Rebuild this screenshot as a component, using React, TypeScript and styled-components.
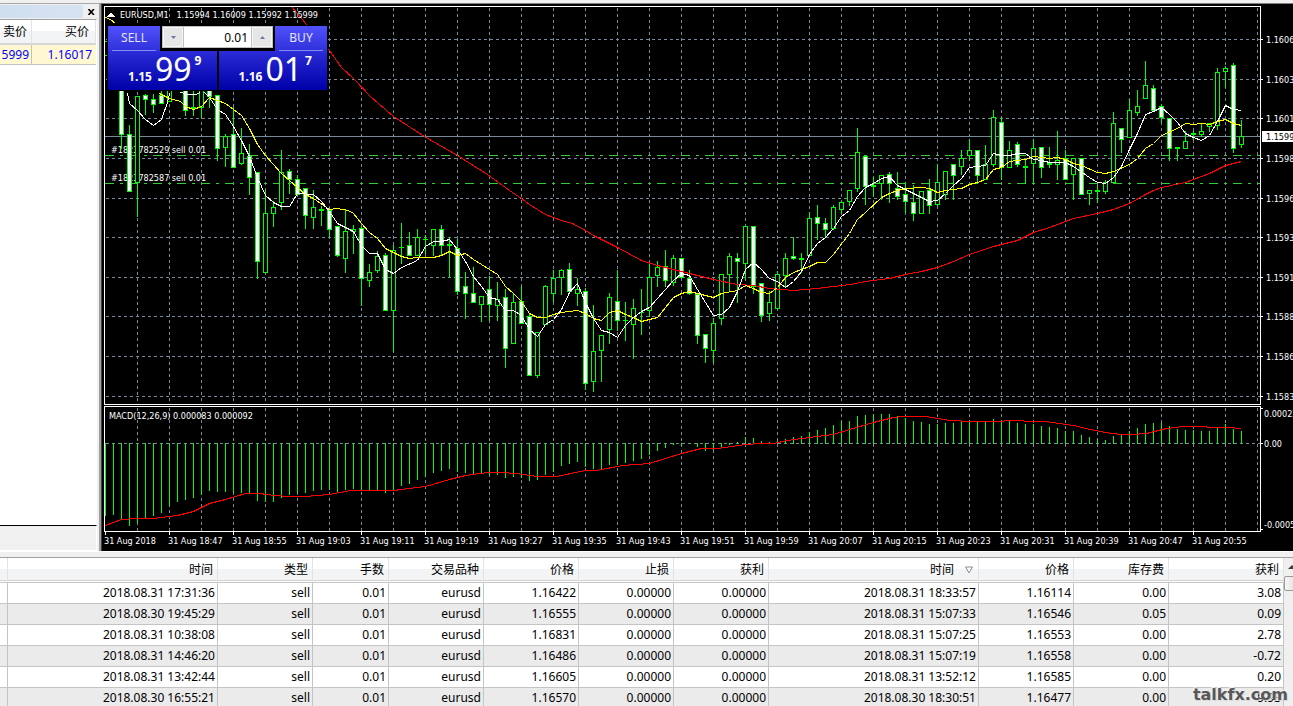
import React from "react";
import styled, { createGlobalStyle } from "styled-components";

/* ---------- theme values ---------- */

const UI_FONT = '"Noto Sans", "Noto Sans CJK SC", sans-serif';
const CHART_FONT = '"DejaVu Sans Condensed", "DejaVu Sans", sans-serif';
const GRID = "#778899";
const LIME = "#00ff00";
const FACE = "#f0f0f0";
const RULE = "#c4c4c4";

const GlobalStyle = createGlobalStyle`
  *, *::before, *::after { box-sizing: border-box; }
  body { margin: 0; background: ${FACE}; font-family: ${UI_FONT}; font-size: 12px; color: #000; }
  button, input { font: inherit; border: 0; padding: 0; margin: 0; border-radius: 0; }
`;

/* ---------- chart data ---------- */

type Candle = [high: number, top: number, bottom: number, low: number, kind: "f" | "h"];

const f = "f" as const;
const h = "h" as const;

// One candle every 8px, the first one at x = 105.
const CANDLES: (Candle | null)[] = [
  [41, 41, 56, 56, h], [68, 68, 83, 83, h],
  [60, 70, 135, 149, f], [125, 134, 192, 192, f], [96, 96, 183, 217, h], [94, 95, 100, 115, f],
  [94, 99, 105, 113, f], [85, 95, 104, 104, f], [60, 70, 102, 102, h], null,
  [60, 70, 111, 116, f], [80, 107, 109, 116, h], [60, 70, 108, 118, h], [60, 80, 97, 108, f],
  [95, 95, 149, 161, f], [134, 136, 148, 167, h], [107, 134, 168, 168, f], [128, 153, 164, 165, h],
  [144, 156, 178, 195, f], [172, 172, 262, 279, f], [190, 213, 273, 273, h], [201, 207, 214, 227, h],
  [150, 172, 203, 210, h], [169, 171, 180, 194, f], [175, 179, 195, 195, f], [188, 188, 216, 229, f],
  [190, 207, 218, 229, h], [206, 209, 211, 226, h], [210, 210, 230, 237, f], [226, 226, 256, 257, f],
  [209, 231, 259, 273, h], [225, 229, 232, 254, h], [226, 228, 279, 306, f], [264, 272, 281, 287, h],
  [251, 256, 271, 273, h], [253, 255, 311, 311, f], [245, 250, 311, 352, h], [223, 247, 248, 264, h],
  [232, 245, 256, 256, f], [229, 237, 256, 256, h], [235, 239, 240, 254, h], [229, 229, 246, 256, h],
  [225, 229, 246, 256, f], [237, 244, 246, 278, h], [239, 248, 292, 295, f], [272, 286, 294, 319, f],
  [267, 293, 303, 303, f], [296, 296, 305, 322, h], [276, 289, 305, 321, f], [282, 299, 306, 321, h],
  [289, 297, 349, 368, f], [294, 302, 344, 344, h], [286, 301, 324, 324, f], [313, 316, 376, 376, f],
  [332, 332, 376, 378, h], [285, 286, 325, 325, h], [270, 278, 294, 302, h], [269, 270, 278, 295, h],
  [263, 269, 292, 294, f], [278, 289, 294, 306, h], [288, 291, 384, 390, f], [305, 351, 382, 392, h],
  [335, 335, 351, 382, h], [293, 297, 330, 344, h], [270, 301, 321, 331, f], [302, 320, 321, 341, h],
  [299, 308, 325, 359, h], [289, 312, 313, 335, h], [263, 277, 311, 317, h], [261, 267, 276, 287, h],
  [250, 266, 281, 287, f], [255, 258, 283, 286, h], [258, 258, 278, 279, f], [270, 278, 294, 295, f],
  [294, 294, 336, 344, f], [334, 334, 349, 363, f], [318, 323, 351, 363, h], [274, 274, 319, 325, h],
  [253, 256, 275, 292, h], [253, 258, 262, 303, f], [226, 226, 264, 280, h], [226, 226, 287, 294, f],
  [283, 283, 316, 322, f], [291, 302, 314, 321, h], [271, 274, 309, 309, h], [253, 258, 276, 287, h],
  [237, 256, 259, 260, f], [253, 258, 260, 273, h], [212, 218, 256, 256, h], [205, 217, 224, 240, f],
  [218, 223, 230, 237, f], [205, 207, 229, 230, h], [201, 202, 210, 214, h], [190, 190, 202, 206, h],
  [128, 152, 189, 192, h], [155, 156, 187, 205, f], [177, 185, 187, 197, h], [175, 175, 184, 200, h],
  [172, 174, 184, 203, f], [172, 188, 197, 200, f], [182, 194, 202, 213, f], [185, 202, 214, 221, f],
  [191, 191, 214, 214, h], [179, 190, 206, 214, f], [164, 182, 205, 206, h], [171, 171, 195, 200, h],
  [164, 164, 176, 200, f], [150, 158, 167, 175, h], [139, 150, 156, 161, h], [150, 150, 176, 184, f],
  [145, 164, 180, 180, h], [110, 117, 165, 167, h], [117, 122, 168, 180, f], [141, 150, 168, 168, h],
  [142, 144, 165, 167, f], [159, 166, 168, 184, h], [139, 148, 164, 184, h], [147, 147, 168, 178, f],
  [147, 163, 165, 168, h], [131, 160, 165, 180, h], [150, 158, 180, 180, f], [158, 158, 175, 200, h],
  [158, 158, 195, 195, f], [190, 190, 194, 205, h], [185, 190, 192, 203, h], [180, 182, 192, 194, h],
  [112, 123, 183, 183, h], [128, 128, 140, 153, f], [99, 110, 138, 138, h], [90, 106, 113, 116, h],
  [61, 85, 99, 99, h], [85, 88, 111, 111, f], [104, 106, 118, 123, f], [118, 118, 149, 161, f],
  [147, 147, 149, 161, h], [131, 141, 149, 149, h], [131, 133, 135, 140, h], [124, 131, 135, 137, h],
  [123, 123, 127, 132, h], [68, 72, 126, 130, h], [66, 68, 72, 88, h], [63, 65, 149, 153, f],
  [120, 136, 145, 148, h],
];

// Far end of each MACD histogram bar, measured from the zero line at y = 443.
const MACD_BARS = [
  515, 514, 518, 525, 522, 518, 515, 512, 505, 501, 499, 497, 494, 490, 491, 491, 492, 492, 493, 500,
  501, 501, 497, 494, 492, 492, 490, 489, 489, 491, 489, 488, 490, 490, 489, 492, 489, 485, 483, 479,
  476, 472, 470, 468, 471, 472, 473, 473, 474, 474, 477, 476, 477, 480, 479, 474, 471, 465, 463, 461,
  466, 468, 468, 464, 464, 462, 460, 458, 454, 450, 447, 444, 445, 443, 446, 450, 449, 447, 444, 442,
  437, 438, 441, 442, 441, 439, 437, 436, 432, 430, 428, 425, 421, 421, 416, 415, 414, 414, 414, 416,
  418, 421, 422, 424, 424, 423, 423, 422, 422, 422, 422, 419, 420, 421, 423, 424, 424, 426, 427, 428,
  431, 431, 435, 437, 439, 440, 436, 435, 431, 428, 424, 423, 423, 426, 429, 430, 430, 431, 431, 428,
  424, 429, 431,
];

const YELLOW_MA = [
  "105,17 110,19 115,23",
  "159,93 169,98 180,101 185,106 193,109 201,106 209,97 225,103 241,115 249,128 257,144 265,155 281,173 297,187 305,194 313,198 329,209 337,208 348,210 353,213 361,223 369,232 377,238 385,248 393,252 401,256 409,258 417,257 433,257 441,255 449,251 457,255 465,253 473,259 481,264 489,269 497,274 505,286 513,293 521,301 529,313 537,317 545,317 553,314 561,312 577,310 585,313 593,318 601,320 609,312 617,310 625,314 633,317 641,321 649,319 657,317 665,307 673,297 681,293 689,291 713,297 721,293 737,290 745,285 753,288 761,292 769,293 777,287 785,277 793,272 801,269 809,266 817,262 825,262 833,254 849,233 857,219 865,212 881,197 889,193 897,190 905,188 922,187 929,188 937,192 945,190 961,188 969,184 977,182 985,179 993,169 1001,167 1009,161 1025,159 1033,156 1049,158 1057,157 1065,159 1073,163 1081,165 1097,172 1105,173 1113,171 1129,164 1137,158 1145,148 1153,143 1161,135 1177,128 1185,123 1193,124 1201,123 1209,124 1217,121 1225,119 1233,123 1241,125",
];

const WHITE_MA = [
  "127,93 129,103 137,110 145,119 153,125 161,119 167,102 169,93",
  "180,92 189,94 195,94 200,92",
  "204,92 209,97 217,109 225,114 233,126 241,140 249,156 257,177 265,195 273,202 281,206 289,206 297,193 313,194 321,201 329,211 337,223 345,227 353,231 361,245 369,253 377,253 385,269 393,273 401,267 417,260 425,246 433,241 441,241 449,239 457,249 465,261 473,276 481,286 489,297 497,299 505,310 513,310 521,315 529,329 537,336 545,324 553,319 561,309 569,292 577,283 585,302 593,318 601,330 609,332 617,337 625,325 633,317 641,311 649,307 657,298 665,289 673,280 681,273 689,275 697,289 705,302 713,315 721,314 729,307 737,291 745,269 753,262 761,269 769,278 777,281 785,287 793,281 801,271 809,254 817,243 825,237 833,228 841,216 849,210 857,196 865,187 873,183 881,178 889,176 897,185 913,193 929,201 937,200 945,193 953,185 961,178 969,167 977,166 985,165 993,153 1001,155 1009,155 1017,153 1025,153 1033,159 1041,160 1049,162 1065,162 1073,166 1089,177 1097,182 1105,183 1113,177 1121,166 1129,149 1137,133 1145,114 1153,111 1161,107 1169,114 1177,122 1185,133 1193,137 1201,140 1209,135 1217,121 1225,105 1233,109 1241,110",
];

const RED_MA = [
  "292,7 306,24 329,50 341,67 354,79 370,96 393,116 424,136 457,155 487,174 509,190 521,198 529,204 545,214 561,220 572,223 585,230 593,235 617,247 641,260 657,265 689,273 713,279 737,284 753,285 769,288 793,290 817,288 833,286 850,284 865,281 889,278 905,274 921,271 937,267 953,261 969,254 993,246 1017,240 1033,232 1049,227 1073,218 1097,213 1113,209 1129,203 1145,194 1153,190 1161,187 1185,182 1209,173 1225,165 1241,161",
];

const MACD_SIGNAL =
  "105,525 121,519 137,518 153,518 169,516 177,515 193,511 209,503 225,499 245,493 261,493 265,494 287,496 305,496 329,494 350,490 393,490 425,486 449,479 465,475 487,472 500,472 516,473 537,476 556,476 585,470 596,470 622,465 649,463 665,458 681,453 701,448 717,448 745,444 760,443 773,443 787,440 809,437 833,434 849,429 873,422 893,417 903,416 925,416 950,420 970,421 1001,421 1006,420 1021,420 1026,421 1045,421 1073,425 1090,429 1105,432 1120,434 1132,434 1146,433 1166,428 1183,426 1205,426 1208,427 1228,427 1241,428";

const PRICE_LEVELS: [string, number][] = [
  ["1.16060", 39], ["1.16035", 79], ["1.16010", 118], ["1.15985", 158], ["1.15960", 198],
  ["1.15935", 237], ["1.15910", 277], ["1.15885", 316], ["1.15860", 356], ["1.15835", 396],
];

const TIME_LABELS = [
  "31 Aug 2018", "31 Aug 18:47", "31 Aug 18:55", "31 Aug 19:03", "31 Aug 19:11", "31 Aug 19:19",
  "31 Aug 19:27", "31 Aug 19:35", "31 Aug 19:43", "31 Aug 19:51", "31 Aug 19:59", "31 Aug 20:07",
  "31 Aug 20:15", "31 Aug 20:23", "31 Aug 20:31", "31 Aug 20:39", "31 Aug 20:47", "31 Aug 20:55",
];

const ORDER_LINES: [string, number][] = [
  ["#1823782529 sell 0.01", 155],
  ["#1823782587 sell 0.01", 183],
];

const GRID_COLUMNS = Array.from({ length: 36 }, (_, i) => 137 + i * 32);

/* ---------- page frame ---------- */

const Page = styled.div`
  height: 100vh;
  display: flex;
  flex-direction: column;
  overflow: hidden;
  position: relative;
`;

const Workspace = styled.main`
  flex: none;
  display: flex;
  height: 552px;
  border-top: 3px solid ${FACE};
  border-bottom: 1px solid #fff;
`;

/* ---------- market watch ---------- */

const Watch = styled.aside`
  flex: none;
  width: 101px;
  display: flex;
  flex-direction: column;
  border-top: 1px solid #a8a8a8;
  border-right: 2px solid #a0a0a0;
  padding-right: 2px;
`;

const WatchTitle = styled.div`
  display: flex;
  align-items: center;
  justify-content: space-between;
  height: 15px;
`;

const TitleGrip = styled.div`
  width: 83px;
  height: 13px;
  background: linear-gradient(90deg, #d0dff0, #d5e2f2);
`;

const CloseButton = styled.button`
  display: flex;
  background: none;
  width: 9px;
`;

const WatchBody = styled.div`
  flex: 1;
  background: #fff;
  border-top: 1px solid #a0a0a0;
  border-bottom: 1px solid #000;
  border-right: 1px solid #fff;
`;

const WatchFooter = styled.div`
  height: 25px;
  border-right: 1px solid #fff;
  border-bottom: 1px solid #fff;
`;

const WatchTable = styled.table`
  width: 100%;
  border-collapse: separate;
  border-spacing: 0;
  table-layout: fixed;
  text-align: right;

  th {
    height: 25px;
    padding: 0 6px 0 0;
    font-weight: 400;
    line-height: 16px;
    background: linear-gradient(#fff 50%, #f3f4f6 50%);
    border-right: 1px solid #e2e3e5;
    border-bottom: 2px solid #d5d5d5;
  }
  th:first-child { width: 32px; padding-right: 4px; }
  td {
    height: 20px;
    padding: 0 4px 0 0;
    color: #0000ff;
    background: #fff8d2;
    border-bottom: 1px solid ${RULE};
  }
  td:first-child {
    padding-right: 2px;
    border-right: 1px solid ${RULE};
  }
`;

const ClippedPrice = styled.span`
  display: flex;
  justify-content: flex-end;
  overflow: hidden;
`;

/* ---------- chart window ---------- */

const ChartWindow = styled.section`
  flex: 1;
  min-width: 0;
  position: relative;
  overflow: hidden;
  background: #000;
  border-top: 1px solid #808080;
  border-left: 1px solid #404040;
`;

const ChartSvg = styled.svg`
  display: block;
  width: 100%;
  height: 547px;
  shape-rendering: crispEdges;
`;

const ChartText = styled.text<{ $ink?: string }>`
  font-family: ${CHART_FONT};
  font-size: 9px;
  fill: ${(p) => p.$ink ?? "#fff"};
  white-space: pre;
`;

/* ---------- one-click trading panel ---------- */

const TradePanel = styled.form`
  position: absolute;
  left: 5px;
  top: 21px;
  width: 221px;
  padding: 1px;
  background: #000;
`;

const TradeTop = styled.div`
  display: flex;
  justify-content: space-between;
`;

const SideButton = styled.button`
  width: 52px;
  height: 25px;
  padding: 0 4px;
  background: linear-gradient(#5252fb, #3030dc);
  color: #e4e4ff;
  cursor: pointer;

  span {
    display: block;
    height: 24px;
    line-height: 22px;
    border-bottom: 1px solid #8a8af4;
  }
`;

const VolumeBox = styled.div`
  display: flex;
  width: 111px;
  height: 22px;
  padding: 1px;
  gap: 1px;
  background: #c0c0c0;
`;

const VolumeInput = styled.input`
  flex: 1;
  min-width: 0;
  background: #fff;
  text-align: right;
  padding-right: 3px;
  outline: 0;
`;

const StepButton = styled.button`
  display: flex;
  align-items: center;
  justify-content: center;
  width: 20px;
  background: #e6e6e6;
  border: 1px solid #f6f6f6;
`;

const QuoteRow = styled.div`
  display: flex;
  gap: 2px;
`;

const Quote = styled.button`
  flex: 1;
  display: flex;
  justify-content: center;
  height: 39px;
  padding: 0 0 0 5px;
  gap: 3px;
  color: #fff;
  background: linear-gradient(#2c2cd8, #0000a8);
  cursor: pointer;
`;

const QuoteBase = styled.span`
  font-size: 12px;
  font-weight: 700;
  line-height: 16px;
  padding-top: 18px;
`;

const QuoteBig = styled.span`
  font-size: 32px;
  line-height: 35px;
`;

const QuotePip = styled.span`
  font-size: 12px;
  font-weight: 700;
  line-height: 16px;
  padding-top: 2px;
`;

/* ---------- account history ---------- */

const Terminal = styled.section`
  flex: 1;
  display: flex;
  min-height: 0;
  margin-top: 5px;
  border-top: 1px solid #a0a0a0;
  background: #fff;
`;

const TableArea = styled.div`
  flex: 1;
  min-width: 0;
  overflow: hidden;
`;

const HistoryTable = styled.table`
  width: 100%;
  table-layout: fixed;
  border-collapse: separate;
  border-spacing: 0;
  text-align: right;
`;

const HeadCell = styled.th`
  height: 25px;
  padding: 0 4px 0 0;
  font-weight: 400;
  line-height: 16px;
  background: linear-gradient(#fff 11px, #f3f4f6 11px, #f3f4f6 22px, #d0d0d0 22px, #d0d0d0 23px, #fff 23px);
  border-right: 1px solid #e2e3e5;
  border-bottom: 1px solid ${RULE};
`;

const SortLabel = styled.span`
  display: inline-flex;
  align-items: center;
  gap: 11px;
`;

const BodyRow = styled.tr`
  background: #fff;
  &:nth-child(even) { background: #ebebeb; }
`;

const Cell = styled.td`
  height: 21px;
  padding: 0 2px 0 0;
  line-height: 18px;
  white-space: nowrap;
  border-right: 1px solid ${RULE};
  border-bottom: 1px solid ${RULE};
`;

const ScrollTrack = styled.div`
  flex: none;
  width: 9px;
  overflow: hidden;
  background: #f0f0f0;
`;

const ScrollArrow = styled.div`
  height: 18px;
  padding: 7px 0 0 4px;

  svg { display: block; }
`;

const ScrollThumb = styled.div`
  width: 16px;
  height: 15px;
  border: 1px solid #989898;
  border-radius: 2px;
  background: linear-gradient(90deg, #f6f6f6, #dcdcdc);
`;

const Watermark = styled.div`
  position: absolute;
  right: 5px;
  bottom: 2px;
  font-family: "DejaVu Sans", sans-serif;
  font-size: 16px;
  line-height: 18px;
  font-weight: 700;
  color: #585858;
  text-shadow: 1px 1px 0 #d8d8d8, -1px -1px 0 #f4f4f4;
`;

/* ---------- history data ---------- */

const COLUMNS: { label: string; width?: number; sorted?: boolean }[] = [
  { label: "", width: 8 },
  { label: "时间", width: 210 },
  { label: "类型", width: 95 },
  { label: "手数", width: 76 },
  { label: "交易品种", width: 95 },
  { label: "价格", width: 95 },
  { label: "止损", width: 95 },
  { label: "获利", width: 95 },
  { label: "时间", width: 210, sorted: true },
  { label: "价格", width: 95 },
  { label: "库存费", width: 95 },
  { label: "获利" },
];

const ROWS = [
  ["2018.08.31 17:31:36", "1.16422", "2018.08.31 18:33:57", "1.16114", "0.00", "3.08"],
  ["2018.08.30 19:45:29", "1.16555", "2018.08.31 15:07:33", "1.16546", "0.05", "0.09"],
  ["2018.08.31 10:38:08", "1.16831", "2018.08.31 15:07:25", "1.16553", "0.00", "2.78"],
  ["2018.08.31 14:46:20", "1.16486", "2018.08.31 15:07:19", "1.16558", "0.00", "-0.72"],
  ["2018.08.31 13:42:44", "1.16605", "2018.08.31 13:52:12", "1.16585", "0.00", "0.20"],
  ["2018.08.30 16:55:21", "1.16570", "2018.08.30 18:30:51", "1.16477", "0.00", "9.93"],
].map(([opened, openPrice, closed, closePrice, swap, profit]) => [
  "", opened, "sell", "0.01", "eurusd", openPrice, "0.00000", "0.00000", closed, closePrice, swap, profit,
]);

/* ---------- chart drawing ---------- */

function CandleMark({ index, candle }: { index: number; candle: Candle }) {
  const [high, top, bottom, low, kind] = candle;
  const x = 105 + index * 8;
  return (
    <g>
      <rect x={x} y={high} width={1} height={low - high} fill={LIME} />
      <rect x={x - 2} y={top} width={5} height={bottom - top} fill={LIME} />
      {bottom - top > 2 && (
        <rect x={x - 1} y={top + 1} width={3} height={bottom - top - 2} fill={kind === "f" ? "#fff" : "#000"} />
      )}
    </g>
  );
}

function Lines({ sets, color }: { sets: string[]; color: string }) {
  return (
    <g transform="translate(0.5 0.5)">
      {sets.map((points) => (
        <polyline key={points} points={points} fill="none" stroke={color} strokeWidth={1} />
      ))}
    </g>
  );
}

function PriceChart() {
  return (
    <ChartSvg role="img" aria-label="EURUSD,M1">
      <defs>
        <clipPath id="plot">
          <rect x={105} y={7} width={1155} height={397} />
        </clipPath>
      </defs>
      <g transform="translate(-102 -4)">
        <g stroke={GRID} strokeDasharray="3 3">
          {PRICE_LEVELS.map(([, y]) => (
            <line key={y} x1={106} x2={1260} y1={y + 0.5} y2={y + 0.5} />
          ))}
          <line x1={106} x2={1260} y1={443.5} y2={443.5} />
          {GRID_COLUMNS.map((x) => (
            <path key={x} d={`M${x + 0.5} 8V404M${x + 0.5} 408V531`} />
          ))}
        </g>
        <line x1={105} x2={1260} y1={136.5} y2={136.5} stroke={GRID} />

        {ORDER_LINES.map(([label, y]) => (
          <g key={label}>
            <line x1={105} x2={1260} y1={y + 0.5} y2={y + 0.5} stroke="#32cd32" strokeDasharray="9 6 3 6" />
            <ChartText x={111} y={y - 2}>{label}</ChartText>
          </g>
        ))}

        <g clipPath="url(#plot)">
          {CANDLES.map((candle, i) => candle && <CandleMark key={i} index={i} candle={candle} />)}
          <Lines sets={RED_MA} color="#ff0000" />
          <Lines sets={YELLOW_MA} color="#ffff00" />
          <Lines sets={WHITE_MA} color="#ffffff" />
        </g>

        {MACD_BARS.map((end, i) => (
          <rect
            key={i}
            x={105 + i * 8}
            y={Math.min(end, 443)}
            width={1}
            height={Math.abs(end - 443) + 1}
            fill={LIME}
          />
        ))}
        <Lines sets={[MACD_SIGNAL]} color="#ff0000" />

        <path d="M104.5 6.5H1260.5V404.5H104.5ZM104.5 406.5H1260.5V531.5H104.5Z" fill="none" stroke="#fff" />
        <path d="M107 17h8l-4-5z" fill="#fff" />
        <ChartText x={120} y={18}>{"EURUSD,M1   1.15994 1.16009 1.15992 1.15999"}</ChartText>
        <ChartText x={109} y={419}>MACD(12,26,9) 0.000083 0.000092</ChartText>

        {PRICE_LEVELS.map(([label, y]) => (
          <g key={label}>
            <rect x={1261} y={y} width={2} height={1} fill="#fff" />
            <ChartText x={1266} y={y + 4}>{label}</ChartText>
          </g>
        ))}
        <rect x={1262} y={131} width={40} height={11} fill="#fff" />
        <ChartText x={1266} y={140} $ink="#000">1.15999</ChartText>

        <ChartText x={1264} y={417}>0.000228</ChartText>
        <ChartText x={1264} y={447}>0.00</ChartText>
        <ChartText x={1264} y={528}>-0.000577</ChartText>
        <path d="M1261 408.5h2M1261 443.5h2M1261 529.5h2" stroke="#fff" />

        {TIME_LABELS.map((label, i) => (
          <g key={label}>
            <rect x={105 + i * 64} y={532} width={1} height={3} fill="#fff" />
            <ChartText x={104 + i * 64} y={544}>{label}</ChartText>
          </g>
        ))}
      </g>
    </ChartSvg>
  );
}

function Arrow({ up }: { up?: boolean }) {
  return (
    <svg width="5" height="3" aria-hidden="true">
      <path d={up ? "M0 3h5L2.5 0z" : "M0 0h5L2.5 3z"} fill="#6878a8" />
    </svg>
  );
}

function QuoteButton({ base, big, pip }: { base: string; big: string; pip: string }) {
  return (
    <Quote type="button">
      <QuoteBase>{base}</QuoteBase>
      <QuoteBig>{big}</QuoteBig>
      <QuotePip>{pip}</QuotePip>
    </Quote>
  );
}

/* ---------- page ---------- */

export default function App() {
  return (
    <Page>
      <GlobalStyle />
      <Workspace>
        <Watch>
          <WatchTitle>
            <TitleGrip />
            <CloseButton type="button" aria-label="关闭">
              <svg width="7" height="6" viewBox="0 0 7 6" aria-hidden="true">
                <path d="M0.5 0L6 6M6 0L0.5 6" stroke="#000" strokeWidth="1.6" />
              </svg>
            </CloseButton>
          </WatchTitle>
          <WatchBody>
            <WatchTable>
              <thead>
                <tr>
                  <th>卖价</th>
                  <th>买价</th>
                </tr>
              </thead>
              <tbody>
                <tr>
                  <td><ClippedPrice>1.15999</ClippedPrice></td>
                  <td>1.16017</td>
                </tr>
              </tbody>
            </WatchTable>
          </WatchBody>
          <WatchFooter />
        </Watch>

        <ChartWindow>
          <PriceChart />
          <TradePanel>
            <TradeTop>
              <SideButton type="button"><span>SELL</span></SideButton>
              <VolumeBox>
                <StepButton type="button" aria-label="减少"><Arrow /></StepButton>
                <VolumeInput aria-label="手数" defaultValue="0.01" />
                <StepButton type="button" aria-label="增加"><Arrow up /></StepButton>
              </VolumeBox>
              <SideButton type="button"><span>BUY</span></SideButton>
            </TradeTop>
            <QuoteRow>
              <QuoteButton base="1.15" big="99" pip="9" />
              <QuoteButton base="1.16" big="01" pip="7" />
            </QuoteRow>
          </TradePanel>
        </ChartWindow>
      </Workspace>

      <Terminal>
        <TableArea>
          <HistoryTable>
            <colgroup>
              {COLUMNS.map((c, i) => <col key={i} width={c.width} />)}
            </colgroup>
            <thead>
              <tr>
                {COLUMNS.map((c, i) => (
                  <HeadCell key={i}>
                    {c.sorted ? (
                      <SortLabel>
                        {c.label}
                        <svg width="9" height="8" aria-hidden="true">
                          <path d="M0.5 1h7L4 7z" fill="none" stroke="#8c8c8c" />
                        </svg>
                      </SortLabel>
                    ) : (
                      c.label
                    )}
                  </HeadCell>
                ))}
              </tr>
            </thead>
            <tbody>
              {ROWS.map((row) => (
                <BodyRow key={row[1]}>
                  {row.map((value, i) => <Cell key={i}>{value}</Cell>)}
                </BodyRow>
              ))}
            </tbody>
          </HistoryTable>
        </TableArea>
        <ScrollTrack>
          <ScrollArrow>
            <svg width="8" height="4" aria-hidden="true">
              <path d="M0 4h8L4 0z" fill="#404040" />
            </svg>
          </ScrollArrow>
          <ScrollThumb />
        </ScrollTrack>
      </Terminal>
      <Watermark>talkfx.com</Watermark>
    </Page>
  );
}
